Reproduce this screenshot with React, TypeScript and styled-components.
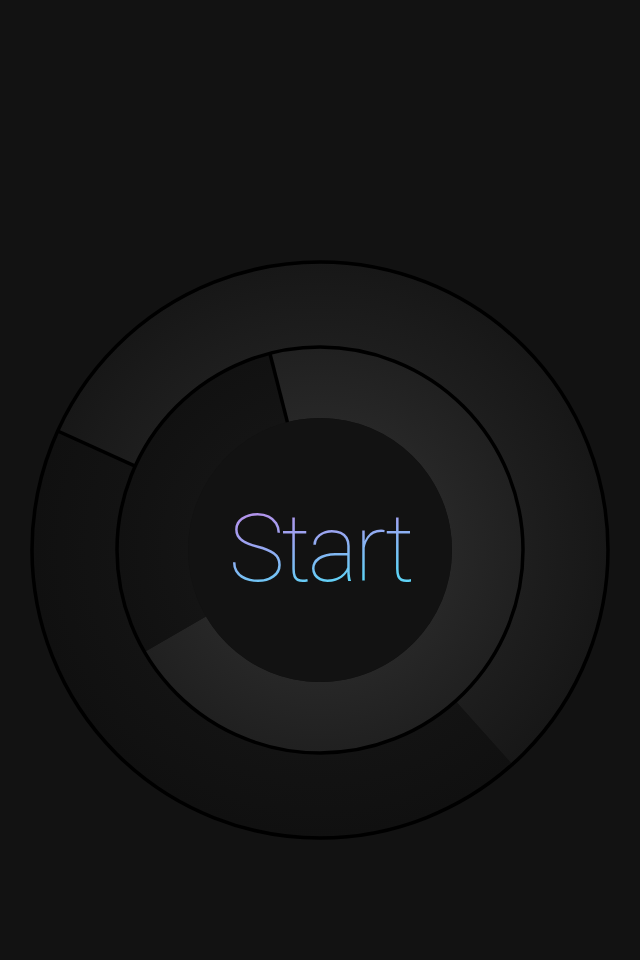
import React from "react";
import styled, { createGlobalStyle } from "styled-components";

const Global = createGlobalStyle`
  html, body { margin: 0; padding: 0; background: #121212; }
  #root { min-height: 960px; }
`;

const Page = styled.main`
  width: 640px;
  height: 960px;
  box-sizing: border-box;
  padding-top: 230px;
  display: flex;
  flex-direction: column;
  align-items: center;
  background: #121212;
  overflow: hidden;
`;

const Dial = styled.div`
  position: relative;
  width: 640px;
  height: 640px;
`;

const Rings = styled.svg`
  display: block;
  width: 640px;
  height: 640px;
`;

const Label = styled.button`
  position: absolute;
  left: 50%;
  top: calc(50% - 2px);
  transform: translate(-50%, -50%);
  margin: 0;
  padding: 0;
  border: 0;
  background: linear-gradient(170deg, #c08ae8 0%, #9aa6f2 40%, #5fd2f6 80%);
  -webkit-background-clip: text;
  background-clip: text;
  color: transparent;
  font-family: Roboto, "Liberation Sans", sans-serif;
  font-weight: 100;
  font-size: 95px;
  line-height: 1;
  letter-spacing: -3.5px;
  cursor: pointer;
`;

const C = 320;
const rad = (d: number) => (d * Math.PI) / 180;
const pt = (r: number, a: number) => [C + r * Math.cos(rad(a)), C + r * Math.sin(rad(a))];

function sector(r1: number, r2: number, a1: number, a2: number) {
  const large = a2 - a1 > 180 ? 1 : 0;
  const [x1, y1] = pt(r2, a1);
  const [x2, y2] = pt(r2, a2);
  const [x3, y3] = pt(r1, a2);
  const [x4, y4] = pt(r1, a1);
  return `M${x1} ${y1} A${r2} ${r2} 0 ${large} 1 ${x2} ${y2} L${x3} ${y3} A${r1} ${r1} 0 ${large} 0 ${x4} ${y4} Z`;
}

function line(r1: number, r2: number, a: number) {
  const [x1, y1] = pt(r1, a);
  const [x2, y2] = pt(r2, a);
  return { x1, y1, x2, y2 };
}

const R_OUT = 288;
const R_MID = 203;
const R_IN = 132;

const OUT_A = 204.4;
const OUT_B = 408.1;
const IN_A = 255.7;
const IN_B = 509.8;

export default function App() {
  const outerDiv = line(R_MID, R_OUT, OUT_A);
  const innerDiv = line(R_IN, R_MID, IN_A);
  return (
    <>
      <Global />
      <Page>
        <Dial>
          <Rings viewBox="0 0 640 640">
            <defs>
              <radialGradient id="outerLight" gradientUnits="userSpaceOnUse" cx={C} cy={C} r={R_OUT}>
                <stop offset={R_MID / R_OUT} stopColor="#1e1e1e" />
                <stop offset="1" stopColor="#171717" />
              </radialGradient>
              <radialGradient id="outerDark" gradientUnits="userSpaceOnUse" cx={C} cy={C} r={R_OUT}>
                <stop offset={R_MID / R_OUT} stopColor="#131313" />
                <stop offset="1" stopColor="#101010" />
              </radialGradient>
              <radialGradient id="innerLight" gradientUnits="userSpaceOnUse" cx={C} cy={C} r={R_MID}>
                <stop offset={R_IN / R_MID} stopColor="#272727" />
                <stop offset="1" stopColor="#202020" />
              </radialGradient>
              <radialGradient id="innerDark" gradientUnits="userSpaceOnUse" cx={C} cy={C} r={R_MID}>
                <stop offset={R_IN / R_MID} stopColor="#141414" />
                <stop offset="1" stopColor="#111111" />
              </radialGradient>
            </defs>
            <path d={sector(R_MID, R_OUT, OUT_A, OUT_B)} fill="url(#outerLight)" />
            <path d={sector(R_MID, R_OUT, OUT_B, OUT_A + 360)} fill="url(#outerDark)" />
            <path d={sector(R_IN, R_MID, IN_A, IN_B)} fill="url(#innerLight)" />
            <path d={sector(R_IN, R_MID, IN_B, IN_A + 360)} fill="url(#innerDark)" />
            <circle cx={C} cy={C} r={R_IN} fill="#121212" />
            <circle cx={C} cy={C} r={R_OUT} fill="none" stroke="#000" strokeWidth={3.5} />
            <circle cx={C} cy={C} r={R_MID} fill="none" stroke="#000" strokeWidth={3.5} />
            <line {...outerDiv} stroke="#000" strokeWidth={3.5} />
            <line {...innerDiv} stroke="#000" strokeWidth={3.5} />
          </Rings>
          <Label type="button">Start</Label>
        </Dial>
      </Page>
    </>
  );
}
